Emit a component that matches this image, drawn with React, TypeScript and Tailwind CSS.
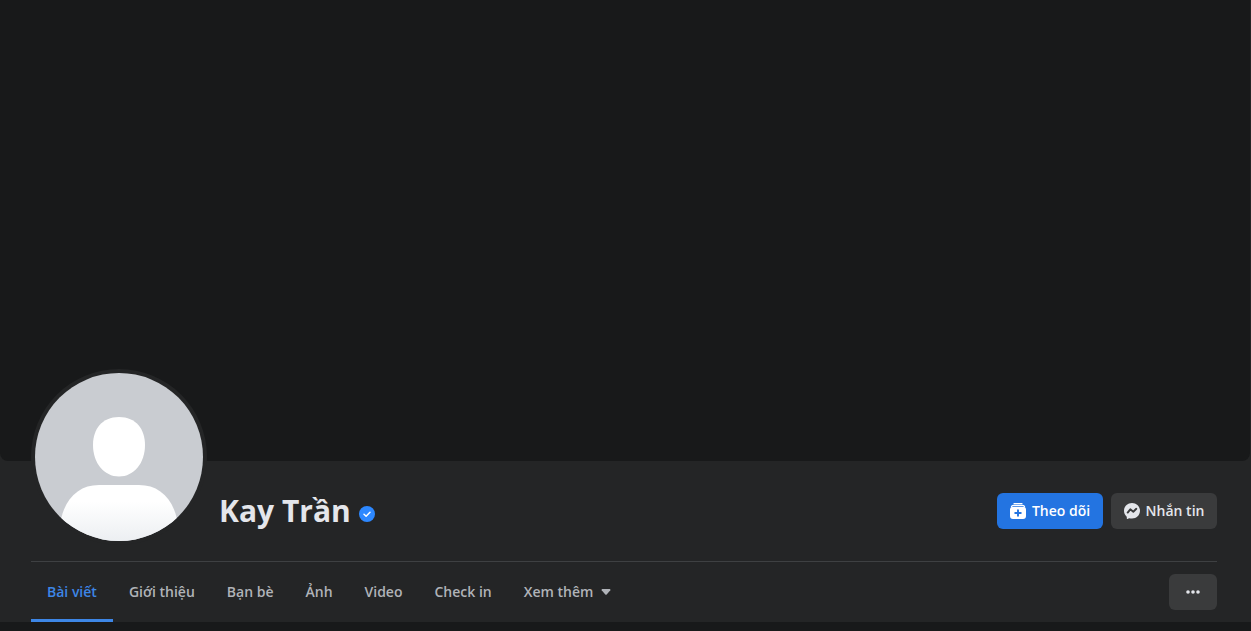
import React from 'react';

const tabs = ['Giới thiệu', 'Bạn bè', 'Ảnh', 'Video', 'Check in'];

function Avatar() {
  return (
    <svg viewBox="0 0 168 168" className="size-full" role="img" aria-label="Kay Trần">
      <defs>
        <clipPath id="avatar-clip">
          <circle cx="84" cy="84" r="84" />
        </clipPath>
        <linearGradient id="avatar-body" x1="0" y1="0" x2="0" y2="1">
          <stop offset="0.3" stopColor="#ffffff" />
          <stop offset="1" stopColor="#eceff2" />
        </linearGradient>
      </defs>
      <g clipPath="url(#avatar-clip)">
        <rect width="168" height="168" fill="#c9ccd1" />
        <path
          d="M84 44C101 44 110 56 110 72C110 90 99 103.500 84 103.500S58 90 58 72C58 56 67 44 84 44Z"
          fill="#fff"
        />
        <path d="M64 112H104C123 112 137 124 142 146V168H26V146C31 124 45 112 64 112Z" fill="url(#avatar-body)" />
      </g>
    </svg>
  );
}

function VerifiedBadge() {
  return (
    <svg viewBox="0 0 16 16" className="size-4" role="img" aria-label="Verified">
      <circle cx="8" cy="8" r="8" fill="#2d88ff" />
      <path d="M5 8.300L7.100 10.200L11 6.300" fill="none" stroke="#fff" strokeWidth="1.500" strokeLinecap="round" strokeLinejoin="round" />
    </svg>
  );
}

function FollowIcon() {
  return (
    <svg viewBox="0 0 16 16" className="size-4" aria-hidden="true">
      <path d="M4 0.600H12" stroke="#fff" strokeWidth="1.200" strokeLinecap="round" />
      <path d="M1.500 3.700Q1.900 2.400 3.200 2.400H12.800Q14.100 2.400 14.500 3.700" fill="none" stroke="#fff" strokeWidth="1.300" strokeLinecap="round" />
      <path
        fill="#fff"
        d="M3 3.800H13A3 3 0 0 1 16 6.800V13A3 3 0 0 1 13 16H3A3 3 0 0 1 0 13V6.800A3 3 0 0 1 3 3.800Z"
      />
      <path d="M8 7.200V12.800M5.200 10H10.800" stroke="#2374e1" strokeWidth="1.900" strokeLinecap="round" />
    </svg>
  );
}

function MessengerIcon() {
  return (
    <svg viewBox="0 0 16 16" className="size-4" aria-hidden="true">
      <path
        fill="#e4e6eb"
        d="M8 0C3.500 0 0 3.300 0 7.750C0 10.100 1 12.100 2.500 13.500C2.700 13.700 2.800 13.900 2.800 14.200V15.500C2.800 15.900 3.200 16.100 3.500 15.900L5.100 15.200C6 15.400 7 15.500 8 15.500C12.500 15.500 16 12.200 16 7.750S12.500 0 8 0Z"
      />
      <path d="M3.700 9.600L6.300 6.300L9.300 8.700L12.300 5.800" fill="none" stroke="#3a3b3c" strokeWidth="1.900" strokeLinejoin="round" strokeLinecap="round" />
    </svg>
  );
}

export default function App() {
  return (
    <div className="min-h-screen bg-[#18191a] font-['Open_Sans','Noto_Sans',sans-serif] text-[#e4e6eb]">
      <header className="bg-[#242526]">
        <div className="pr-px">
          <div className="h-[461px] rounded-b-lg bg-[#18191a]" />
        </div>

        <div className="pr-[34px] pl-[31px]">
          <div className="box-content flex h-[100px] items-center border-b border-[#3e4042]">
            <div className="relative -mt-[108px] size-[176px] shrink-0 rounded-full bg-[#242526] p-1">
              <Avatar />
            </div>
            <h1 className="ml-3 text-[30px] leading-9 font-bold">Kay Trần</h1>
            <span className="mt-1.5 ml-2">
              <VerifiedBadge />
            </span>
            <div className="ml-auto flex gap-2">
              <button type="button" className="flex h-9 w-[106px] items-center justify-center gap-1.5 rounded-md bg-[#2374e1] text-sm font-semibold text-white">
                <FollowIcon />
                Theo dõi
              </button>
              <button type="button" className="flex h-9 w-[106px] items-center justify-center gap-1.5 rounded-md bg-[#3a3b3c] text-sm font-semibold">
                <MessengerIcon />
                Nhắn tin
              </button>
            </div>
          </div>

          <div className="flex h-[60px] items-center justify-between">
            <nav className="flex h-full text-sm font-semibold text-[#b0b3b8]">
              <a href="#posts" aria-current="page" className="flex items-center border-b-3 border-[#3d86e6] px-4 pt-[3px] text-[#3d86e6]">
                Bài viết
              </a>
              {tabs.map((tab) => (
                <a key={tab} href="#section" className="flex items-center px-4">
                  {tab}
                </a>
              ))}
              <button type="button" className="flex items-center gap-2 px-4">
                Xem thêm
                <svg viewBox="0 0 10 6" className="h-1.5 w-2.5" aria-hidden="true">
                  <path d="M1.200 0H8.800Q9.800 0.400 9.300 1.200L5.700 5.400Q5 6 4.300 5.400L0.700 1.200Q0.200 0.400 1.200 0Z" fill="currentColor" />
                </svg>
              </button>
            </nav>
            <button type="button" aria-label="More" className="flex h-9 w-12 items-center justify-center rounded-md bg-[#3a3b3c]">
              <svg viewBox="0 0 14 4" className="h-1 w-3.5" fill="#e4e6eb" aria-hidden="true">
                <circle cx="2" cy="2" r="1.800" />
                <circle cx="7" cy="2" r="1.800" />
                <circle cx="12" cy="2" r="1.800" />
              </svg>
            </button>
          </div>
        </div>
      </header>
    </div>
  );
}
